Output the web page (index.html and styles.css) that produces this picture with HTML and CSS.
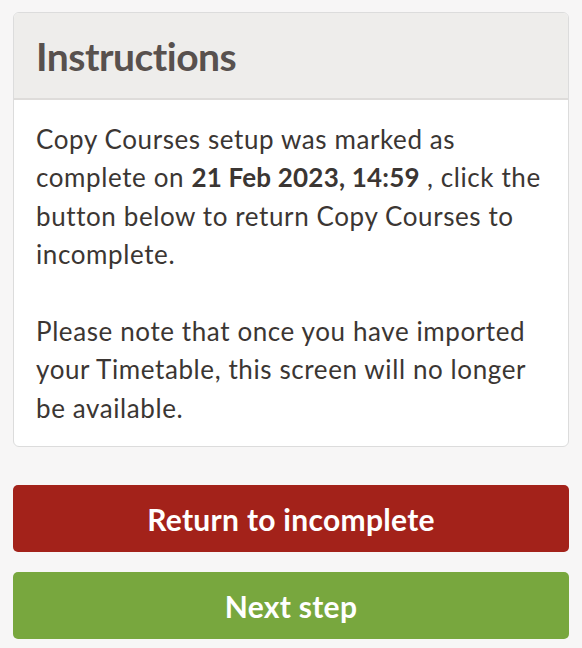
FILE: index.html
```html
<!DOCTYPE html>
<html lang="en">
<head>
<meta charset="utf-8">
<title>Instructions</title>
<link rel="stylesheet" href="styles.css">
</head>
<body>
<div class="page">
  <section class="panel">
    <header class="panel-head"><h2>Instructions</h2></header>
    <div class="panel-body">
      <p>Copy Courses setup was marked as complete on <strong>21 Feb 2023, 14:59</strong> , click the button below to return Copy Courses to incomplete.</p>
      <p>Please note that once you have imported your Timetable, this screen will no longer be available.</p>
    </div>
  </section>
  <div class="actions">
    <button class="btn btn-red">Return to incomplete</button>
    <button class="btn btn-green">Next step</button>
  </div>
</div>
</body>
</html>
```
FILE: styles.css
```css
html, body { margin: 0; padding: 0; background: #f7f6f6; }
body { font-family: "Lato", "Open Sans", sans-serif; color: #3b3633; }
.page { padding: 12px 13px 0 13px; }
.panel {
  background: #fff;
  border: 1px solid #dcdcdc;
  border-radius: 6px;
  overflow: hidden;
}
.panel-head {
  background: #eeedeb;
  border-bottom: 2px solid #dedcda;
  height: 85px;
  display: flex;
  align-items: center;
  padding: 0 22px;
}
.panel-head h2 {
  margin: 0;
  font-size: 39px;
  font-weight: 700;
  letter-spacing: -0.5px;
  color: #58514e;
}
.panel-body {
  padding: 20px 14px 19px 22px;
  font-size: 26px;
  line-height: 38.4px;
  letter-spacing: 0.6px;
}
.panel-body p { margin: 0 0 38.4px 0; }
.panel-body p:last-child { margin-bottom: 0; }
.panel-body strong { font-weight: 700; letter-spacing: 0.2px; }
.actions { display: flex; flex-direction: column; gap: 20px; margin-top: 38px; }
.btn {
  height: 67px;
  border: 0;
  border-radius: 5px;
  color: #fff;
  font-family: inherit;
  font-size: 30px;
  font-weight: 700;
  letter-spacing: 0.3px;
  cursor: pointer;
}
.btn-red { background: #a3221a; }
.btn-green { background: #78a73e; }
```
